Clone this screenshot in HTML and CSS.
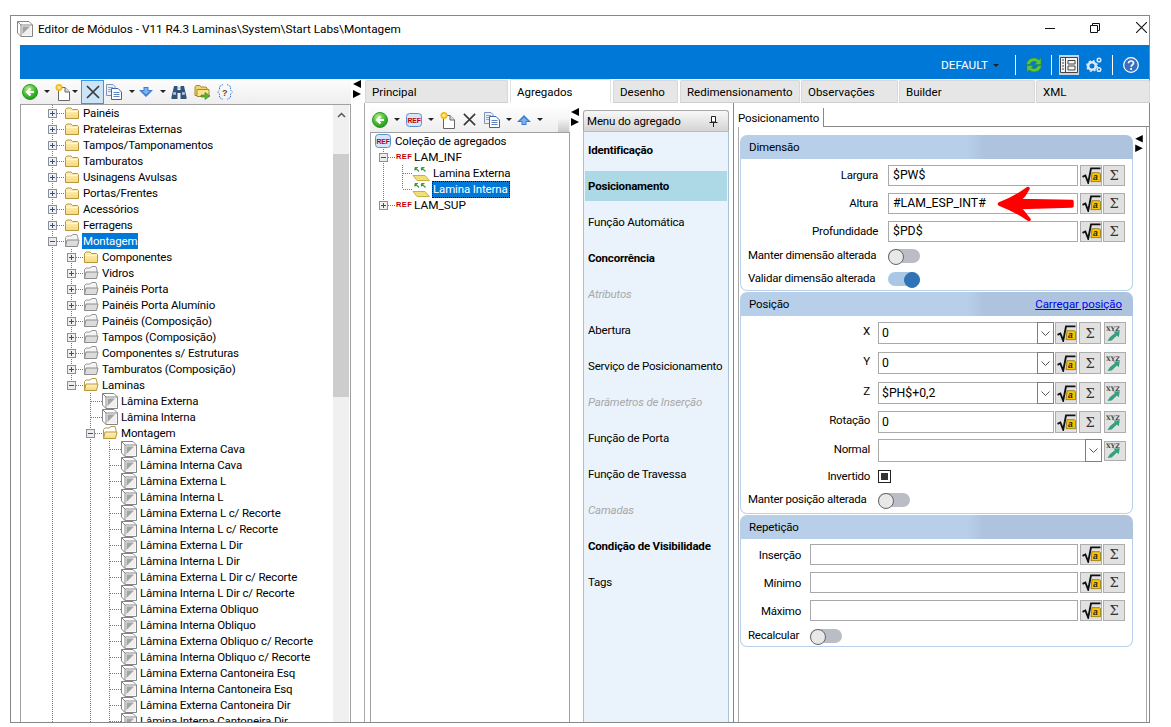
FILE: index.html
```html
<!DOCTYPE html>
<html lang="pt-BR">
<head>
<meta charset="utf-8">
<title>Editor de Módulos</title>
<link rel="stylesheet" href="styles.css">
</head>
<body>
<svg class="defs" width="0" height="0">
  <defs>
    <linearGradient id="fy" x1="0" y1="0" x2="0" y2="1"><stop offset="0" stop-color="#fff3c4"/><stop offset="1" stop-color="#f7d878"/></linearGradient>
    <radialGradient id="gb" cx=".4" cy=".3" r=".8"><stop offset="0" stop-color="#b8f08a"/><stop offset=".6" stop-color="#3cb52a"/><stop offset="1" stop-color="#1c8a1c"/></radialGradient>
    <symbol id="box" viewBox="0 0 16 16"><path d="M.5 .5H12L15.500 4V15.500H4L.5 12Z" fill="#fff" stroke="#858585"/><path d="M.5 .5L4 4H15.500M4 4V15.500" fill="none" stroke="#858585"/><path d="M5 5H14.500V14.500H5Z" fill="#efefef"/><path d="M5.500 5.500H13L5.500 13Z" fill="#a4a4a4"/></symbol>
    <symbol id="folder" viewBox="0 0 16 16"><path d="M1.500 13.500V4.500L3 3H7L8.500 4.500H13.500L14.500 5.500V13.500Z" fill="url(#fy)" stroke="#b8983c"/><path d="M2 6.500H14" stroke="#fff8d8"/></symbol>
    <symbol id="fopen" viewBox="0 0 16 16"><path d="M1.500 13.500V4.500L3 3H7L9 1.500H13L14 5V7" fill="#fff" stroke="#b8983c"/><path d="M1.500 13.500L3 7H15L13.500 13.500Z" fill="url(#fy)" stroke="#b8983c"/></symbol>
    <symbol id="fgray" viewBox="0 0 16 16"><path d="M1.500 13.500V4.500L3 3H7L9 1.500H13L14 5V7" fill="#f4f4f4" stroke="#9a9a9a"/><path d="M1.500 13.500L3 7H15L13.500 13.500Z" fill="#dcdcdc" stroke="#8c8c8c"/></symbol>
    <symbol id="plus" viewBox="0 0 9 9"><rect x=".5" y=".5" width="8" height="8" fill="#f0f0f0" stroke="#8a8f98"/><path d="M2 4.500H7M4.500 2V7" stroke="#33508c"/></symbol>
    <symbol id="minus" viewBox="0 0 9 9"><rect x=".5" y=".5" width="8" height="8" fill="#ececec" stroke="#8a8f98"/><path d="M2 4.500H7" stroke="#33508c"/></symbol>
    <symbol id="back" viewBox="0 0 16 16"><circle cx="8" cy="8" r="7.500" fill="url(#gb)" stroke="#2a9a2a"/><path d="M12 8H5.500M8.500 4.500L5 8L8.500 11.500" fill="none" stroke="#fff" stroke-width="2.200"/></symbol>
    <symbol id="newdoc" viewBox="0 0 17 18"><path d="M4.500 4.500H11L15.500 9V17.500H4.500Z" fill="#fff" stroke="#666"/><path d="M11 4.500V9H15.500" fill="#ddd" stroke="#666"/><circle cx="5" cy="4.500" r="3.500" fill="#f7b81c"/><circle cx="5" cy="4.500" r="1.800" fill="#ffe98a"/></symbol>
    <symbol id="xmark" viewBox="0 0 16 16"><path d="M2 2L14 14M14 2L2 14" stroke="#3a3a3a" stroke-width="1.700"/></symbol>
    <symbol id="copy" viewBox="0 0 16 16"><path d="M.500 .500H7L9 2.500V11.500H.500Z" fill="#eaf1fa" stroke="#7d93b8"/><path d="M2 3.500H7M2 5.500H5M2 7.500H5" stroke="#8aa6d0"/><path d="M5.500 4.500H12L15.500 8V15.500H5.500Z" fill="#fff" stroke="#3d67a8"/><path d="M7.500 8.500H13.500M7.500 10.500H13.500M7.500 12.500H13.500" stroke="#5b86c4"/></symbol>
    <symbol id="adown" viewBox="0 0 14 10"><path d="M4.500 0H9.500V3H14L7 10L0 3H4.500Z" fill="#3c7fd0"/><path d="M5.500 1H8.500V4H11L7 7.500L3 4H5.500Z" fill="#7fb2ea"/></symbol>
    <symbol id="aup" viewBox="0 0 14 10"><path d="M7 0L14 7H9.500V10H4.500V7H0Z" fill="#3c7fd0"/><path d="M7 2.500L11 6H8.500V9H5.500V6H3Z" fill="#7fb2ea"/></symbol>
    <symbol id="binoc" viewBox="0 0 16 16"><path d="M3 2H6.500V6H9.500V2H13L15.500 13V15H9.500V9H6.500V15H.500V13Z" fill="#34527e"/><path d="M2.200 9.500H5M11 9.500H13.800" stroke="#b4cfec" stroke-width="2.500"/><path d="M6.500 4H9.500" stroke="#8fa8c8"/></symbol>
    <symbol id="fgo" viewBox="0 0 17 17"><path d="M1 3.500L2 2H6L7 3.500H12L13 4.500V12H1Z" fill="#f2d571" stroke="#a58b2f"/><path d="M3 6H15V13H3Z" fill="#fae38e" stroke="#a58b2f"/><path d="M7 11.500H11V9L16 12.500L11 16V13.500H7Z" fill="#57b82f" stroke="#2f7c1e" stroke-width=".6"/></symbol>
    <symbol id="help" viewBox="0 0 16 16"><circle cx="8" cy="8" r="7.300" fill="#3a6fc0" stroke="#fff" stroke-width="1.200"/><path d="M5.500 6.300C5.500 4.800 6.700 4 8 4C9.500 4 10.500 4.900 10.500 6.100C10.500 7.800 8.100 7.900 8.100 9.800" fill="none" stroke="#fff" stroke-width="1.700"/><circle cx="8.100" cy="12" r="1.100" fill="#fff"/></symbol>
    <symbol id="sqrt" viewBox="0 0 20 18"><path d="M.5 10.500L3.500 9L6.500 16.500L9.500 1.500H19.500" fill="none" stroke="#111" stroke-width="2"/><path d="M10.500 6H18.500L19.500 7V15.500H9.500Z" fill="#f9c400" stroke="#7a5f00" stroke-width=".7"/><text x="11.500" y="14" class="sq-a">a</text></symbol>
    <symbol id="xyz" viewBox="0 0 20 18"><text x="0" y="6.500" class="xyz-t">XYZ</text><path d="M1.500 17L4 13L9.500 8.500L7.500 7L14.500 6.500L13.500 13L11.500 11L6 16.500Z" fill="#35a080"/></symbol>
    <symbol id="ylam" viewBox="0 0 18 15"><path d="M1 9.500H13L17.500 14.500H5Z" fill="#efe07a" stroke="#c7b53c"/><path d="M3 1.500V4.500M3 1.500H6M3 1.500L7 5.500M9.500 1.500V4.500M9.500 1.500H12.500M9.500 1.500L13.500 5.500" fill="none" stroke="#3d9a3d" stroke-width="1.200"/></symbol>
    <symbol id="refbox" viewBox="0 0 16 14"><rect x=".5" y=".5" width="15" height="13" rx="3" fill="#d4e6f8" stroke="#5b8fd0"/><text x="1.600" y="9.800" class="ref-t">REF</text></symbol>
  </defs>
</svg>

<div class="window">
  <header class="titlebar">
    <svg class="ico-title"><use href="#box"/></svg>
    <span class="title-text">Editor de Módulos - V11 R4.3 Laminas\System\Start Labs\Montagem</span>
    <svg class="wc wc-min" viewBox="0 0 10 10"><path d="M0 5.500H10" stroke="#111"/></svg>
    <svg class="wc wc-max" viewBox="0 0 10 10"><path d="M2.500 2.500V.5H9.500V7.500H7.500M.5 2.500H7.500V9.500H.5Z" fill="none" stroke="#111"/></svg>
    <svg class="wc wc-close" viewBox="0 0 10 10"><path d="M0 0L10 10M10 0L0 10" stroke="#111"/></svg>
  </header>

  <div class="client">
    <div class="ribbon">
      <span class="rb-text">DEFAULT</span>
      <span class="caret caret-rb"></span>
      <span class="rb-sep rb-s1"></span>
      <svg class="rb-refresh" viewBox="0 0 18 18"><path d="M1.500 8.500C2.500 2.500 9 0 14 4L16 2V8.500H9.500L11.800 6.200C9 4.500 6 5.500 5 8.500Z" fill="#5ec43a" stroke="#2c8a22" stroke-width=".5"/><path d="M16.500 9.500C15.500 15.500 9 18 4 14L2 16V9.500H8.500L6.200 11.800C9 13.500 12 12.500 13 9.500Z" fill="#5ec43a" stroke="#2c8a22" stroke-width=".5"/></svg>
      <span class="rb-sep rb-s2"></span>
      <span class="rb-active"><svg viewBox="0 0 18 18"><path d="M.5 1.500H17.500V16.500H.5Z" fill="#f4f4f4" stroke="#444"/><path d="M5.500 1.500V16.500M8 4.500H15V8H8ZM8 10H15V14H8ZM2 4H4M2 7H4M2 10H4M2 13H4" fill="none" stroke="#444"/></svg></span>
      <svg class="rb-gears" viewBox="0 0 16 16"><circle cx="6" cy="9" r="3.800" fill="none" stroke="#dfe8f3" stroke-width="2.600"/><circle cx="6" cy="9" r="5.300" fill="none" stroke="#dfe8f3" stroke-width="1.300" stroke-dasharray="2 2.200"/><circle cx="13" cy="3" r="1.800" fill="none" stroke="#dfe8f3" stroke-width="1.500"/><circle cx="13" cy="12.500" r="1.800" fill="none" stroke="#dfe8f3" stroke-width="1.500"/></svg>
      <span class="rb-sep rb-s3"></span>
      <svg class="rb-help"><use href="#help"/></svg>
    </div>

    <div class="main">
      <aside class="left">
        <div class="toolbar tb-left">
          <svg class="i16 m2"><use href="#back"/></svg>
          <span class="caret m6"></span>
          <svg class="i17 m4"><use href="#newdoc"/></svg>
          <span class="caret m1"></span>
          <span class="tb-active m3"><svg class="i16"><use href="#xmark"/></svg></span>
          <svg class="i16 m2"><use href="#copy"/></svg>
          <span class="caret m7"></span>
          <svg class="i14 m4"><use href="#adown"/></svg>
          <span class="caret m7"></span>
          <svg class="i16 m5"><use href="#binoc"/></svg>
          <svg class="i17 m7"><use href="#fgo"/></svg>
          <svg class="i-q m6" viewBox="0 0 16 18"><path d="M6 1.500L2.500 3.500V7L.5 9L2.500 11V14.500L6 16.500M10 1.500L13.500 3.500V7L15.500 9L13.500 11V14.500L10 16.500" fill="none" stroke="#2b7cd9" stroke-dasharray="1.500 1"/><text x="5" y="13" class="qm">?</text></svg>
        </div>
        <div class="tree-box">
          <div class="tree-scroll">
            <ul class="tree t-root">
              <li><div class="tr"><svg class="exp"><use href="#plus"/></svg><i class="stub s7"></i><svg class="ic"><use href="#folder"/></svg><span>Painéis</span></div></li>
              <li><div class="tr"><svg class="exp"><use href="#plus"/></svg><i class="stub s7"></i><svg class="ic"><use href="#folder"/></svg><span>Prateleiras Externas</span></div></li>
              <li><div class="tr"><svg class="exp"><use href="#plus"/></svg><i class="stub s7"></i><svg class="ic"><use href="#folder"/></svg><span>Tampos/Tamponamentos</span></div></li>
              <li><div class="tr"><svg class="exp"><use href="#plus"/></svg><i class="stub s7"></i><svg class="ic"><use href="#folder"/></svg><span>Tamburatos</span></div></li>
              <li><div class="tr"><svg class="exp"><use href="#plus"/></svg><i class="stub s7"></i><svg class="ic"><use href="#folder"/></svg><span>Usinagens Avulsas</span></div></li>
              <li><div class="tr"><svg class="exp"><use href="#plus"/></svg><i class="stub s7"></i><svg class="ic"><use href="#folder"/></svg><span>Portas/Frentes</span></div></li>
              <li><div class="tr"><svg class="exp"><use href="#plus"/></svg><i class="stub s7"></i><svg class="ic"><use href="#folder"/></svg><span>Acessórios</span></div></li>
              <li><div class="tr"><svg class="exp"><use href="#plus"/></svg><i class="stub s7"></i><svg class="ic"><use href="#folder"/></svg><span>Ferragens</span></div></li>
              <li>
                <div class="tr"><svg class="exp"><use href="#minus"/></svg><i class="stub s7"></i><svg class="ic"><use href="#fgray"/></svg><span class="sel-node">Montagem</span></div>
                <ul class="tree">
                  <li><div class="tr"><svg class="exp"><use href="#plus"/></svg><i class="stub s7"></i><svg class="ic"><use href="#folder"/></svg><span>Componentes</span></div></li>
                  <li><div class="tr"><svg class="exp"><use href="#plus"/></svg><i class="stub s7"></i><svg class="ic"><use href="#fgray"/></svg><span>Vidros</span></div></li>
                  <li><div class="tr"><svg class="exp"><use href="#plus"/></svg><i class="stub s7"></i><svg class="ic"><use href="#fgray"/></svg><span>Painéis Porta</span></div></li>
                  <li><div class="tr"><svg class="exp"><use href="#plus"/></svg><i class="stub s7"></i><svg class="ic"><use href="#fgray"/></svg><span>Painéis Porta Alumínio</span></div></li>
                  <li><div class="tr"><svg class="exp"><use href="#plus"/></svg><i class="stub s7"></i><svg class="ic"><use href="#fgray"/></svg><span>Painéis (Composição)</span></div></li>
                  <li><div class="tr"><svg class="exp"><use href="#plus"/></svg><i class="stub s7"></i><svg class="ic"><use href="#fgray"/></svg><span>Tampos (Composição)</span></div></li>
                  <li><div class="tr"><svg class="exp"><use href="#plus"/></svg><i class="stub s7"></i><svg class="ic"><use href="#fgray"/></svg><span>Componentes s/ Estruturas</span></div></li>
                  <li><div class="tr"><svg class="exp"><use href="#plus"/></svg><i class="stub s7"></i><svg class="ic"><use href="#fgray"/></svg><span>Tamburatos (Composição)</span></div></li>
                  <li class="last">
                    <div class="tr"><svg class="exp"><use href="#minus"/></svg><i class="stub s7"></i><svg class="ic"><use href="#fopen"/></svg><span>Laminas</span></div>
                    <ul class="tree">
                      <li><div class="tr"><i class="stub s11"></i><svg class="ic"><use href="#box"/></svg><span>Lâmina Externa</span></div></li>
                      <li><div class="tr"><i class="stub s11"></i><svg class="ic"><use href="#box"/></svg><span>Lâmina Interna</span></div></li>
                      <li>
                        <div class="tr"><svg class="exp"><use href="#minus"/></svg><i class="stub s7"></i><svg class="ic"><use href="#fopen"/></svg><span>Montagem</span></div>
                        <ul class="tree">
                          <li><div class="tr"><i class="stub s11"></i><svg class="ic"><use href="#box"/></svg><span>Lâmina Externa Cava</span></div></li>
                          <li><div class="tr"><i class="stub s11"></i><svg class="ic"><use href="#box"/></svg><span>Lâmina Interna Cava</span></div></li>
                          <li><div class="tr"><i class="stub s11"></i><svg class="ic"><use href="#box"/></svg><span>Lâmina Externa L</span></div></li>
                          <li><div class="tr"><i class="stub s11"></i><svg class="ic"><use href="#box"/></svg><span>Lâmina Interna L</span></div></li>
                          <li><div class="tr"><i class="stub s11"></i><svg class="ic"><use href="#box"/></svg><span>Lâmina Externa L c/ Recorte</span></div></li>
                          <li><div class="tr"><i class="stub s11"></i><svg class="ic"><use href="#box"/></svg><span>Lâmina Interna L c/ Recorte</span></div></li>
                          <li><div class="tr"><i class="stub s11"></i><svg class="ic"><use href="#box"/></svg><span>Lâmina Externa L Dir</span></div></li>
                          <li><div class="tr"><i class="stub s11"></i><svg class="ic"><use href="#box"/></svg><span>Lâmina Interna L Dir</span></div></li>
                          <li><div class="tr"><i class="stub s11"></i><svg class="ic"><use href="#box"/></svg><span>Lâmina Externa L Dir c/ Recorte</span></div></li>
                          <li><div class="tr"><i class="stub s11"></i><svg class="ic"><use href="#box"/></svg><span>Lâmina Interna L Dir c/ Recorte</span></div></li>
                          <li><div class="tr"><i class="stub s11"></i><svg class="ic"><use href="#box"/></svg><span>Lâmina Externa Obliquo</span></div></li>
                          <li><div class="tr"><i class="stub s11"></i><svg class="ic"><use href="#box"/></svg><span>Lâmina Interna Obliquo</span></div></li>
                          <li><div class="tr"><i class="stub s11"></i><svg class="ic"><use href="#box"/></svg><span>Lâmina Externa Obliquo c/ Recorte</span></div></li>
                          <li><div class="tr"><i class="stub s11"></i><svg class="ic"><use href="#box"/></svg><span>Lâmina Interna Obliquo c/ Recorte</span></div></li>
                          <li><div class="tr"><i class="stub s11"></i><svg class="ic"><use href="#box"/></svg><span>Lâmina Externa Cantoneira Esq</span></div></li>
                          <li><div class="tr"><i class="stub s11"></i><svg class="ic"><use href="#box"/></svg><span>Lâmina Interna Cantoneira Esq</span></div></li>
                          <li><div class="tr"><i class="stub s11"></i><svg class="ic"><use href="#box"/></svg><span>Lâmina Externa Cantoneira Dir</span></div></li>
                          <li><div class="tr"><i class="stub s11"></i><svg class="ic"><use href="#box"/></svg><span>Lâmina Interna Cantoneira Dir</span></div></li>
                        </ul>
                      </li>
                    </ul>
                  </li>
                </ul>
              </li>
            </ul>
          </div>
          <div class="scrollbar">
            <svg class="sb-up" viewBox="0 0 9 6"><path d="M1 5L4.500 1.500L8 5" fill="none" stroke="#555" stroke-width="1.500"/></svg>
            <div class="sb-thumb"></div>
          </div>
        </div>
      </aside>

      <div class="splitter">
        <svg class="arrows" viewBox="0 0 8 18"><path d="M8 0V8L0 4ZM0 10V18L8 14Z" fill="#000"/></svg>
      </div>

      <section class="tabs-pane">
        <nav class="tabstrip">
          <span class="tab t1">Principal</span>
          <span class="tab tab-on t2">Agregados</span>
          <span class="tab t3">Desenho</span>
          <span class="tab t4">Redimensionamento</span>
          <span class="tab t5">Observações</span>
          <span class="tab t6">Builder</span>
          <span class="tab t7">XML</span>
        </nav>
        <div class="tab-body">
          <div class="agg">
            <div class="toolbar tb-agg">
              <svg class="i16 m2"><use href="#back"/></svg>
              <span class="caret m6"></span>
              <svg class="i-ref m6"><use href="#refbox"/></svg>
              <span class="caret m6"></span>
              <svg class="i17 m5"><use href="#newdoc"/></svg>
              <svg class="i14x m6"><use href="#xmark"/></svg>
              <svg class="i16 m7"><use href="#copy"/></svg>
              <span class="caret m6"></span>
              <svg class="i14 m5"><use href="#aup"/></svg>
              <span class="caret m6"></span>
              <span class="tb-more"></span>
            </div>
            <div class="agg-tree">
              <div class="tr tr-root"><svg class="i-ref"><use href="#refbox"/></svg><span>Coleção de agregados</span></div>
              <ul class="tree t-agg">
                <li>
                  <div class="tr"><svg class="exp"><use href="#minus"/></svg><i class="stub s7"></i><span class="ref-red">REF</span><span class="ref-name">LAM_INF</span></div>
                  <ul class="tree t-agg2">
                    <li><div class="tr"><i class="stub s9"></i><svg class="i-y"><use href="#ylam"/></svg><span>Lamina Externa</span></div></li>
                    <li class="last"><div class="tr"><i class="stub s9"></i><svg class="i-y"><use href="#ylam"/></svg><span class="sel-item">Lamina Interna</span></div></li>
                  </ul>
                </li>
                <li class="last">
                  <div class="tr"><svg class="exp"><use href="#plus"/></svg><i class="stub s7"></i><span class="ref-red">REF</span><span class="ref-name">LAM_SUP</span></div>
                </li>
              </ul>
            </div>
          </div>

          <div class="splitter sp2">
            <svg class="arrows" viewBox="0 0 8 18"><path d="M8 0V8L0 4ZM0 10V18L8 14Z" fill="#000"/></svg>
          </div>

          <div class="menu">
            <div class="menu-head">
              <span>Menu do agregado</span>
              <svg class="pin" viewBox="0 0 9 11"><path d="M2.500 .5H6.500V6H2.500ZM.5 6.500H8.500M4.500 7V11" fill="#fff" stroke="#222"/></svg>
            </div>
            <ul class="menu-list">
              <li class="b">Identificação</li>
              <li class="b on">Posicionamento</li>
              <li>Função Automática</li>
              <li class="b">Concorrência</li>
              <li class="off">Atributos</li>
              <li>Abertura</li>
              <li>Serviço de Posicionamento</li>
              <li class="off">Parâmetros de Inserção</li>
              <li>Função de Porta</li>
              <li>Função de Travessa</li>
              <li class="off">Camadas</li>
              <li class="b">Condição de Visibilidade</li>
              <li>Tags</li>
            </ul>
          </div>

          <div class="props">
            <div class="ptabs"><span class="ptab">Posicionamento</span><span class="ptab-fill"></span></div>
            <div class="page">
              <div class="panels">
                <section class="panel p-dim">
                  <h3 class="p-head">Dimensão</h3>
                  <div class="p-body">
                    <div class="row"><label class="lbl">Largura</label><div class="fld">$PW$</div><button class="btn sq"><svg><use href="#sqrt"/></svg></button><button class="btn sg">Σ</button></div>
                    <div class="row"><label class="lbl">Altura</label><div class="fld fld-mark">#LAM_ESP_INT#
                      <svg class="red-arrow" viewBox="0 0 82 36"><path d="M4.500 18Q20 12 33 2.500Q30 9 24 14.500L77 15.500V20L24 21.500Q29 27 34 33.500Q20 24 4.500 18Z" fill="#f00" stroke="#f00" stroke-width="3.500" stroke-linejoin="round"/></svg>
                    </div><button class="btn sq"><svg><use href="#sqrt"/></svg></button><button class="btn sg">Σ</button></div>
                    <div class="row"><label class="lbl">Profundidade</label><div class="fld">$PD$</div><button class="btn sq"><svg><use href="#sqrt"/></svg></button><button class="btn sg">Σ</button></div>
                    <div class="row row-t"><label class="lbl lbl-l">Manter dimensão alterada</label><span class="toggle"></span></div>
                    <div class="row row-t"><label class="lbl lbl-l">Validar dimensão alterada</label><span class="toggle on"></span></div>
                  </div>
                </section>

                <section class="panel p-pos">
                  <h3 class="p-head">Posição<a class="p-link">Carregar posição</a></h3>
                  <div class="p-body">
                    <div class="row"><label class="lbl">X</label><div class="combo"><span class="c-val">0</span><span class="c-btn"><svg viewBox="0 0 9 5"><path d="M.5 .5L4.500 4.500L8.500 .5" fill="none" stroke="#555"/></svg></span></div><button class="btn sq"><svg><use href="#sqrt"/></svg></button><button class="btn sg">Σ</button><button class="btn xy"><svg><use href="#xyz"/></svg></button></div>
                    <div class="row"><label class="lbl">Y</label><div class="combo"><span class="c-val">0</span><span class="c-btn"><svg viewBox="0 0 9 5"><path d="M.5 .5L4.500 4.500L8.500 .5" fill="none" stroke="#555"/></svg></span></div><button class="btn sq"><svg><use href="#sqrt"/></svg></button><button class="btn sg">Σ</button><button class="btn xy"><svg><use href="#xyz"/></svg></button></div>
                    <div class="row r-z"><label class="lbl">Z</label><div class="combo"><span class="c-val">$PH$+0,2</span><span class="c-btn"><svg viewBox="0 0 9 5"><path d="M.5 .5L4.500 4.500L8.500 .5" fill="none" stroke="#555"/></svg></span></div><button class="btn sq"><svg><use href="#sqrt"/></svg></button><button class="btn sg">Σ</button><button class="btn xy"><svg><use href="#xyz"/></svg></button></div>
                    <div class="row r-rot"><label class="lbl">Rotação</label><div class="combo"><span class="c-val">0</span></div><button class="btn sq"><svg><use href="#sqrt"/></svg></button><button class="btn sg">Σ</button><button class="btn xy"><svg><use href="#xyz"/></svg></button></div>
                    <div class="row r-norm"><label class="lbl">Normal</label><div class="combo combo-w"><span class="c-val"></span><span class="c-btn"><svg viewBox="0 0 9 5"><path d="M.5 .5L4.500 4.500L8.500 .5" fill="none" stroke="#555"/></svg></span></div><button class="btn xy xy-n"><svg><use href="#xyz"/></svg></button></div>
                    <div class="row r-chk"><label class="lbl">Invertido</label><span class="check"></span></div>
                    <div class="row row-t"><label class="lbl lbl-l">Manter posição alterada</label><span class="toggle"></span></div>
                  </div>
                </section>

                <section class="panel p-rep">
                  <h3 class="p-head">Repetição</h3>
                  <div class="p-body">
                    <div class="row"><label class="lbl">Inserção</label><div class="fld"></div><button class="btn sq"><svg><use href="#sqrt"/></svg></button><button class="btn sg">Σ</button></div>
                    <div class="row"><label class="lbl">Mínimo</label><div class="fld"></div><button class="btn sq"><svg><use href="#sqrt"/></svg></button><button class="btn sg">Σ</button></div>
                    <div class="row"><label class="lbl">Máximo</label><div class="fld"></div><button class="btn sq"><svg><use href="#sqrt"/></svg></button><button class="btn sg">Σ</button></div>
                    <div class="row row-t"><label class="lbl lbl-l">Recalcular</label><span class="toggle"></span></div>
                  </div>
                </section>
              </div>
              <svg class="arrows arrows-p" viewBox="0 0 8 18"><path d="M8 0V8L0 4ZM0 10V18L8 14Z" fill="#000"/></svg>
            </div>
          </div>
        </div>
      </section>
    </div>
  </div>
</div>
</body>
</html>
```
FILE: styles.css
```css
* { box-sizing: border-box; }
html, body { margin: 0; padding: 0; height: 100%; background: #fff; overflow: hidden; }
body { font-family: Roboto, "Liberation Sans", sans-serif; font-size: 11.5px; letter-spacing: -0.15px; color: #000; line-height: 16px; }
.defs { display: block; height: 0; }
ul { list-style: none; margin: 0; padding: 0; }

.window { margin: 15px 0 0 10px; width: 1140px; height: 708px; border: 1px solid #888; display: flex; flex-direction: column; background: #fff; }

.titlebar { height: 29px; display: flex; align-items: center; padding: 0 0 4px 6px; flex: none; }
.ico-title { width: 16px; height: 16px; flex: none; }
.title-text { margin-left: 5px; flex: 1; font-size: 11.75px; letter-spacing: 0; }
.wc { width: 10px; height: 10px; flex: none; margin-bottom: 2px; }
.wc-min { margin-right: 35px; }
.wc-max { margin-right: 36px; }
.wc-close { margin-right: 2px; width: 11px; height: 11px; }

.client { flex: 1; padding-left: 9px; display: flex; flex-direction: column; min-height: 0; }

.ribbon { height: 34px; flex: none; background: #0078d7; display: flex; align-items: center; justify-content: flex-end; padding: 6px 10px 0 0; color: #fff; }
.rb-text { font-size: 11.8px; letter-spacing: 0; }
.rb-sep { width: 1px; height: 20px; background: #fff; flex: none; }
.caret { width: 0; height: 0; border-left: 3px solid transparent; border-right: 3px solid transparent; border-top: 3px solid #222; flex: none; }
.caret-rb { margin-left: 5px; }
.rb-s1 { margin-left: 16px; }
.rb-refresh { width: 18px; height: 18px; margin-left: 9px; }
.rb-s2 { margin-left: 8px; }
.rb-active { margin-left: 7px; width: 20px; height: 20px; background: #c3d6ea; padding: 1px; display: flex; }
.rb-active svg { width: 18px; height: 18px; }
.rb-gears { width: 16px; height: 16px; margin-left: 7px; }
.rb-s3 { margin-left: 10px; }
.rb-help { width: 16px; height: 16px; margin-left: 10px; }

.main { flex: 1; display: flex; min-height: 0; }

.left { width: 331px; flex: none; display: flex; flex-direction: column; }
.toolbar { flex: none; display: flex; align-items: center; background: linear-gradient(#fdfdfd, #eeeeee); }
.tb-left { height: 25px; }
.i16 { width: 16px; height: 16px; flex: none; }
.i17 { width: 17px; height: 18px; flex: none; }
.i14 { width: 14px; height: 10px; flex: none; }
.i14x { width: 15px; height: 15px; flex: none; }
.i-ref { width: 16px; height: 14px; flex: none; }
.i-q { width: 16px; height: 18px; flex: none; }
.m1 { margin-left: 1px; } .m2 { margin-left: 2px; } .m3 { margin-left: 3px; } .m4 { margin-left: 4px; } .m5 { margin-left: 5px; }
.m6 { margin-left: 6px; } .m7 { margin-left: 7px; } .m8 { margin-left: 8px; }
.tb-active { width: 23px; height: 24px; background: #cce4f7; border: 1px solid #3c96e0; display: flex; align-items: center; justify-content: center; flex: none; }
.qm { font: bold 9px "Liberation Sans", sans-serif; fill: #7a4b16; }

.tree-box { flex: 1; min-height: 0; border: 1px solid #a0a0a0; border-bottom: 0; display: flex; }
.tree-scroll { flex: 1; overflow: hidden; min-width: 0; }
.scrollbar { width: 16px; background: #f0f0f0; flex: none; margin-right: 1px; padding-top: 7px; }
.sb-up { display: block; width: 9px; height: 6px; margin: 0 auto; }
.sb-thumb { height: 243px; background: #cdcdcd; margin-top: 36px; }

.tree { margin-left: 18px; }
.t-root { margin-left: 31px; }
.tree > li { padding-left: 1px; background: repeating-linear-gradient(#777 0 1px, transparent 1px 2px) no-repeat 0 0 / 1px 100%; }
.tree > li.last { background-size: 1px 8px; }
.tr { height: 16px; display: flex; align-items: center; white-space: nowrap; }
.exp { width: 9px; height: 9px; margin-left: -5px; flex: none; }
.stub { height: 1px; flex: none; background: repeating-linear-gradient(90deg, #777 0 1px, transparent 1px 2px); }
.s7 { width: 7px; }
.s9 { width: 9px; }
.s11 { width: 11px; }
.ic { width: 16px; height: 16px; flex: none; margin-right: 3px; }
.sel-node { background: #0078d7; color: #fff; padding: 0 1px; margin-left: -1px; height: 16px; }

.splitter { width: 13px; flex: none; padding: 1px 0 0 2px; }
.arrows { width: 8px; height: 18px; display: block; }

.tabs-pane { flex: 1; min-width: 0; display: flex; flex-direction: column; }
.tabstrip { height: 24px; flex: none; display: flex; padding-left: 1px; gap: 1px; align-items: flex-end; }
.tab { height: 23px; background: #e6e6e6; border: 1px solid #d8d8d8; border-bottom-color: #cfcfcf; border-radius: 2px 2px 0 0; padding: 3px 0 0 6px; flex: none; letter-spacing: 0; }
.t1 { width: 143px; } .t2 { width: 101px; margin-left: 1px; } .t3 { width: 65px; margin-left: 1px; } .t4 { width: 120px; margin-left: 1px; } .t5 { width: 97px; } .t6 { width: 136px; } .t7 { width: 114px; }
.tab-on { background: #fff; height: 24px; padding-top: 4px; border-color: #e0e0e0; border-bottom-color: #fff; }

.tab-body { flex: 1; min-height: 0; display: flex; border-left: 1px solid #a8a8a8; padding-left: 5px; }

.agg { width: 200px; flex: none; display: flex; flex-direction: column; padding-top: 4px; }
.tb-agg { height: 25px; }
.tb-more { width: 11px; height: 13px; margin-left: auto; margin-right: 1px; align-self: flex-end; background: linear-gradient(#f4f4f4, #c8c8c8); }
.agg-tree { flex: 1; border: 1px solid #a0a0a0; border-bottom: 0; }
.tr-root { padding-left: 4px; }
.tr-root .i-ref { margin-right: 4px; }
.t-agg { margin-left: 12px; }
.t-agg2 { margin-left: 18px; }
.ref-red { color: #c00000; font: bold 7.5px/16px "Liberation Sans", sans-serif; width: 18px; letter-spacing: .4px; flex: none; margin-left: 1px; }
.ref-name { letter-spacing: 0; font-size: 11.8px; }
.i-y { width: 18px; height: 15px; flex: none; margin-right: 3px; }
.sel-item { background: #0078d7; color: #fff; outline: 1px dotted #111; outline-offset: -1px; padding: 0 2px 0 1px; height: 17px; margin-left: -1px; }

.sp2 { padding: 1px 0 0 1px; }
.sp2 .arrows { margin-top: 4px; }

.menu { width: 146px; flex: none; margin-top: 7px; display: flex; flex-direction: column; }
.menu-head { height: 21px; flex: none; background: linear-gradient(#f8f8f8, #d4d4d4); border: 1px solid #a8a8a8; border-bottom: 0; border-radius: 3px 3px 0 0; display: flex; align-items: center; justify-content: space-between; padding: 0 10px 0 3px; color: #000; }
.pin { width: 9px; height: 11px; }
.menu-list { flex: 1; background: #eaf3fb; border: 1px solid #a8c0d8; border-bottom: 0; padding: 3px 1px 0; }
.menu-list li { height: 30px; margin-bottom: 6px; line-height: 30px; padding-left: 3px; white-space: nowrap; color: #000; letter-spacing: -0.2px; }
.menu-list .b { font-weight: 700; letter-spacing: -0.2px; }
.menu-list .on { background: #add8e6; }
.menu-list .off { color: #a8a8a8; font-style: italic; }

.props { flex: 1; min-width: 0; margin-left: 4px; border-left: 1px solid #888; padding-top: 5px; display: flex; flex-direction: column; }
.ptabs { height: 19px; flex: none; display: flex; }
.ptab { width: 90px; border-right: 1px solid #888; padding: 2px 0 0 4px; flex: none; }
.ptab-fill { flex: 1; border-bottom: 1px solid #888; }
.page { flex: 1; min-height: 0; margin: 0 2px 0 4px; border: 1px solid #a8a8a8; border-top: 0; border-bottom: 0; display: flex; padding: 8px 0 0 1px; }
.panels { width: 393px; flex: none; }
.arrows-p { margin: 0 0 0 2px; height: 17px; }

.panel { margin-bottom: 1px; }
.p-head { margin: 0; height: 24px; font-weight: 400; font-size: 11.5px; line-height: 24px; padding: 0 11px 0 9px; background: linear-gradient(90deg, #b8cfe9 0, #b8cfe9 58%, #aec4de 62%, #aec4de 100%); border-radius: 7px 7px 0 0; display: flex; justify-content: space-between; color: #000; }
.p-link { color: #0000ee; text-decoration: underline; letter-spacing: -0.05px; }
.p-body { border: 1px solid #b8d0ea; border-top: 0; border-radius: 0 0 7px 7px; }
.row { display: flex; align-items: center; height: 21px; margin-bottom: 7px; }
.lbl { flex: none; text-align: right; white-space: nowrap; color: #000; letter-spacing: -0.25px; }
.lbl-l { text-align: left; padding-left: 7px; }
.fld { flex: none; height: 100%; border: 1px solid #aaa; padding: 0 0 0 4px; line-height: 19px; background: #fff; position: relative; white-space: nowrap; font-size: 12.25px; letter-spacing: 0; }
.btn { flex: none; width: 22px; height: 21px; padding: 0; background: #e1e1e1; border: 1px solid #adadad; display: flex; align-items: center; justify-content: center; font: 13px/1 "DejaVu Serif", serif; color: #333; }
.btn svg { width: 19px; height: 17px; display: block; }
.sq-a { font: italic bold 9px "Liberation Sans", sans-serif; fill: #222; }
.xyz-t { font: bold 6.5px "DejaVu Serif", serif; fill: #444; }
.ref-t { font: bold 6.8px "Liberation Sans", sans-serif; fill: #c00000; }
.row-t { height: 14px; margin-bottom: 9px; }
.toggle { width: 32px; height: 14px; border-radius: 7px; background: #babcc6; flex: none; display: flex; }
.toggle::before { content: ""; width: 14px; height: 14px; border-radius: 50%; background: #e8e8e8; border: 1px solid #666; }
.toggle.on { background: #a8c8e6; justify-content: flex-end; }
.toggle.on::before { background: #2f74b5; border-color: #2f74b5; }

.p-dim .p-body { padding-top: 6px; height: 132px; }
.p-dim .lbl { width: 147px; padding-right: 10px; margin-top: -2px; }
.p-dim .lbl-l { padding-right: 0; }
.p-dim .fld { width: 190px; }
.p-dim .sq, .p-rep .sq { margin-left: 2px; }
.p-dim .sg, .p-rep .sg { margin-left: 1px; }
.red-arrow { position: absolute; left: 106px; top: -8px; width: 82px; height: 36px; }

.p-pos .p-body { padding-top: 6px; height: 198px; }
.p-pos .row { height: 22px; margin-bottom: 8px; }
.p-pos .lbl { width: 137px; padding-right: 8px; margin-top: -4px; }
.p-pos .lbl-l { padding-right: 0; margin-top: -2px; }
.combo { width: 176px; height: 100%; border: 1px solid #aaa; flex: none; display: flex; line-height: 20px; background: #fff; font-size: 12.25px; letter-spacing: 0; }
.combo-w { width: 224px; }
.c-val { flex: 1; padding-left: 3px; }
.c-btn { width: 17px; flex: none; margin: -1px -1px -1px 0; border: 1px solid #808080; background: #fff; display: flex; align-items: center; justify-content: center; }
.c-btn svg { width: 9px; height: 5px; }
.p-pos .btn { height: 22px; }
.p-pos .sq { margin-left: 1px; }
.p-pos .sg { margin-left: 2px; }
.xy { margin-left: 3px; }
.p-pos .r-z { margin-bottom: 7px; }
.p-pos .r-rot { margin-bottom: 6px; }
.p-pos .r-norm { height: 23px; }
.p-pos .xy-n { margin-left: 2px; height: 20px; }
.p-pos .r-chk { height: 13px; margin-bottom: 10px; }
.p-pos .r-chk .lbl { margin-top: -2px; }
.check { width: 13px; height: 13px; border: 1px solid #222; background: #fff; padding: 2px; display: flex; flex: none; }
.check::before { content: ""; flex: 1; background: #333; }
.p-pos .row-t { height: 14px; }

.p-rep .p-body { padding-top: 5px; height: 108px; }
.p-rep .lbl { width: 69px; padding-right: 9px; }
.p-rep .lbl-l { padding-right: 0; margin-top: -2px; }
.p-rep .fld { width: 268px; }
.p-rep .row:nth-child(3) { margin-bottom: 8px; }
```
